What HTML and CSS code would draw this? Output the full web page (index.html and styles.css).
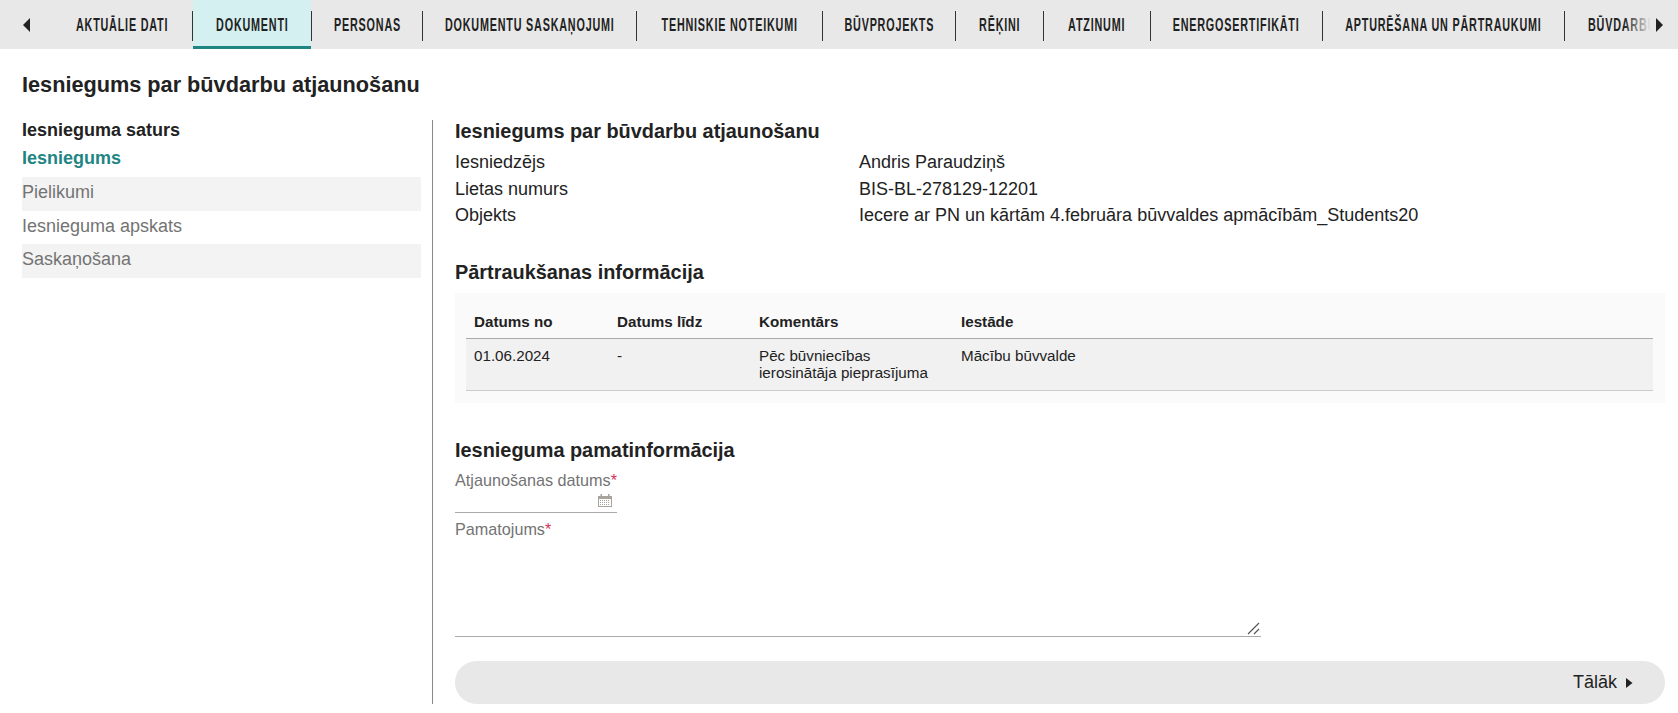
FILE: index.html
```html
<!DOCTYPE html>
<html lang="lv">
<head>
<meta charset="utf-8">
<title>Iesniegums par būvdarbu atjaunošanu</title>
<link rel="stylesheet" href="styles.css">
</head>
<body>
<nav class="tabbar">
  <span class="nav-arrow nav-prev"><svg width="7" height="14" viewBox="0 0 7 14"><path d="M7 0V14L0 7Z" fill="#222"/></svg></span>
  <div class="tabs">
    <a class="tab tab-1"><span>AKTUĀLIE DATI</span></a><i class="sep"></i>
    <a class="tab tab-2 active"><span>DOKUMENTI</span></a><i class="sep"></i>
    <a class="tab tab-3"><span>PERSONAS</span></a><i class="sep"></i>
    <a class="tab tab-4"><span>DOKUMENTU SASKAŅOJUMI</span></a><i class="sep"></i>
    <a class="tab tab-5"><span>TEHNISKIE NOTEIKUMI</span></a><i class="sep"></i>
    <a class="tab tab-6"><span>BŪVPROJEKTS</span></a><i class="sep"></i>
    <a class="tab tab-7"><span>RĒĶINI</span></a><i class="sep"></i>
    <a class="tab tab-8"><span>ATZINUMI</span></a><i class="sep"></i>
    <a class="tab tab-9"><span>ENERGOSERTIFIKĀTI</span></a><i class="sep"></i>
    <a class="tab tab-10"><span>APTURĒŠANA UN PĀRTRAUKUMI</span></a><i class="sep"></i>
    <a class="tab tab-11"><span>BŪVDARBU</span></a>
  </div>
  <span class="nav-arrow nav-next"><svg width="7" height="14" viewBox="0 0 7 14"><path d="M0 0V14L7 7Z" fill="#222"/></svg></span>
</nav>
<h1 class="page-title">Iesniegums par būvdarbu atjaunošanu</h1>
<div class="layout">
  <aside class="side">
    <div class="side-head">Iesnieguma saturs</div>
    <a class="side-item current">Iesniegums</a>
    <a class="side-item odd">Pielikumi</a>
    <a class="side-item">Iesnieguma apskats</a>
    <a class="side-item odd">Saskaņošana</a>
  </aside>
  <main class="main">
    <h2 class="sec sec-first">Iesniegums par būvdarbu atjaunošanu</h2>
    <div class="info"><span>Iesniedzējs</span><span>Andris Paraudziņš</span></div>
    <div class="info"><span>Lietas numurs</span><span>BIS-BL-278129-12201</span></div>
    <div class="info"><span>Objekts</span><span>Iecere ar PN un kārtām 4.februāra būvvaldes apmācībām_Students20</span></div>
    <h2 class="sec sec-break">Pārtraukšanas informācija</h2>
    <div class="table-box">
      <table class="table">
        <thead><tr><th class="c1">Datums no</th><th class="c2">Datums līdz</th><th class="c3">Komentārs</th><th>Iestāde</th></tr></thead>
        <tbody><tr><td>01.06.2024</td><td>-</td><td>Pēc būvniecības ierosinātāja pieprasījuma</td><td>Mācību būvvalde</td></tr></tbody>
      </table>
    </div>
    <h2 class="sec sec-base">Iesnieguma pamatinformācija</h2>
    <label class="lbl">Atjaunošanas datums<em>*</em></label>
    <div class="date">
      <svg width="14" height="13" viewBox="0 0 14 13"><path d="M0 2H2.5V0H4V2H10V0H11.5V2H14V13H0Z" fill="#a8a39b"/><path d="M1 5H13V12H1Z" fill="#fff"/><path d="M2 6.5H12M2 8.5H12M2 10.5H12" stroke="#a8a39b" stroke-dasharray="1 1"/></svg>
    </div>
    <label class="lbl lbl-2">Pamatojums<em>*</em></label>
    <div class="area">
      <svg class="grip" width="13" height="13" viewBox="0 0 13 13"><path d="M1 12L12 1M7 12L12 7" stroke="#555" stroke-width="1.2" fill="none"/></svg>
    </div>
    <div class="actions"><span>Tālāk</span><svg width="7" height="10" viewBox="0 0 7 10"><path d="M0 0V10L6.5 5Z" fill="#222"/></svg></div>
  </main>
</div>
</body>
</html>
```
FILE: styles.css
```css
html, body { margin: 0; padding: 0; height: 713px; overflow: hidden; background: #fff; }
body { font-family: "Liberation Sans", Arial, sans-serif; color: #222; }

.tabbar { display: flex; height: 49px; background: #e8e8e8; position: relative; overflow: hidden; }
.nav-arrow { display: flex; align-items: center; flex: none; }
.nav-prev { width: 53px; padding-left: 23px; box-sizing: border-box; }
.nav-next { position: absolute; right: 0; top: 0; height: 49px; width: 54px; padding-left: 32px; box-sizing: border-box; background: linear-gradient(to right, rgba(232,232,232,0), #e8e8e8 50%); }
.tabs { display: flex; align-items: flex-start; flex: 1; min-width: 0; overflow: hidden; }
.tab { flex: none; box-sizing: border-box; display: flex; align-items: center; justify-content: center; height: 49px; white-space: nowrap; font-family: "Liberation Sans Narrow", "Liberation Sans", sans-serif; font-weight: 700; font-size: 15px; letter-spacing: 1.1px; color: #222; }
.tab span { display: block; transform: scale(0.72, 1.2); }
.tab.active { background: #d4f0f0; box-shadow: inset 0 -3px 0 #1f8583; }
.tab-1 { width: 139px; }
.tab-2 { width: 118px; }
.tab-3 { width: 110px; }
.tab-4 { width: 213px; }
.tab-5 { width: 185px; }
.tab-6 { width: 132px; }
.tab-7 { width: 87px; }
.tab-8 { width: 106px; }
.tab-9 { width: 171px; }
.tab-10 { width: 241px; }
.tab-11 { width: 100px; justify-content: flex-start; padding-left: 23px; }
.tab-11 span { transform-origin: left center; }
.sep { flex: none; width: 1px; height: 30px; margin-top: 11px; background: #333; }

.page-title { margin: 0; padding: 24px 0 0 22px; font-size: 21.7px; line-height: 24px; font-weight: 700; color: #222; }

.layout { display: flex; padding: 23px 13px 0 22px; height: 584px; }
.side { width: 399px; flex: none; }
.side-head { font-size: 18px; font-weight: 700; line-height: 21px; }
.side-item { display: block; font-size: 18px; line-height: 30px; height: 33.5px; color: #737373; }
.side-item.current { color: #1f8583; font-weight: 700; line-height: 34px; height: 36px; }
.side-item.odd { background: #f3f3f3; }
.main { flex: 1; min-width: 0; margin-left: 11px; border-left: 1px solid #888; padding-left: 22px; }

.sec { margin: 0; font-size: 19.9px; line-height: 22px; font-weight: 700; color: #222; }
.sec-first { margin-bottom: 7px; }
.info { display: grid; grid-template-columns: 404px 1fr; font-size: 18px; line-height: 26.5px; }
.sec-break { margin-top: 32px; }
.table-box { margin-top: 10px; background: #fafafa; padding: 12px 12px 12px 11px; }
.table { width: 100%; border-collapse: collapse; font-size: 15.2px; }
.table th { text-align: left; font-weight: 700; padding: 0 8px; height: 34px; border-bottom: 1px solid #aaa; box-sizing: border-box; }
.table td { vertical-align: top; background: #f1f1f1; padding: 8px 8px 9px; line-height: 17px; border-bottom: 1px solid #ccc; }
.c1 { width: 143px; }
.c2 { width: 142px; }
.c3 { width: 202px; }
.sec-base { margin-top: 36px; }
.lbl { display: block; margin-top: 9px; font-size: 16.2px; line-height: 20px; color: #737373; }
.lbl em { font-style: normal; color: #d8315b; }
.lbl-2 { margin-top: 6px; }
.date { width: 162px; height: 23px; box-sizing: border-box; border-bottom: 1px solid #aaa; display: flex; justify-content: flex-end; align-items: flex-start; padding: 4px 5px 0 0; }
.area { width: 806px; height: 98px; box-sizing: border-box; border-bottom: 1px solid #aaa; display: flex; justify-content: flex-end; align-items: flex-end; padding: 0 1px 1px 0; }
.actions { margin-top: 24px; height: 43px; border-radius: 22px; background: #e8e8e8; display: flex; align-items: center; justify-content: flex-end; gap: 9px; padding-right: 32px; font-size: 18px; color: #222; }
```
